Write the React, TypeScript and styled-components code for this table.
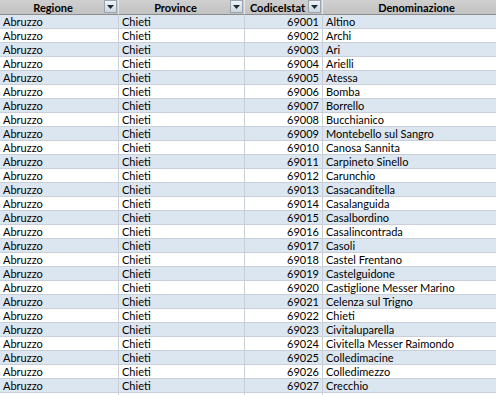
import React from "react";
import styled, { createGlobalStyle } from "styled-components";

const GlobalStyle = createGlobalStyle`
  html, body {
    margin: 0;
    padding: 0;
    background: #ffffff;
    overflow: hidden;
  }
`;

const Sheet = styled.div`
  display: grid;
  grid-template-columns: 119px 126px 78px 188px;
  width: 511px;
  font-family: "Lato", "Liberation Sans", sans-serif;
  font-size: 11px;
  color: #000000;
`;

const HeadCell = styled.div<{ $filter?: boolean }>`
  box-sizing: border-box;
  height: 15px;
  background: linear-gradient(#cfcfcf, #c3c3c3);
  border-right: 1px solid #e6e6e6;
  border-bottom: 1px solid #8c8c8c;
  display: flex;
  align-items: center;
  justify-content: center;
  position: relative;
  font-weight: 700;
  padding-right: ${(p) => (p.$filter ? "12px" : "0")};
`;

const Filter = styled.span`
  position: absolute;
  right: 1px;
  top: 0;
  width: 13px;
  height: 13px;
  box-sizing: border-box;
  border: 1px solid #9aa4ae;
  background: linear-gradient(#eef2f6, #cdd6df);
  display: flex;
  align-items: center;
  justify-content: center;
`;

const Cell = styled.div<{ $odd: boolean; $align?: string }>`
  box-sizing: border-box;
  height: 14px;
  line-height: 13px;
  background: ${(p) => (p.$odd ? "#dce6f1" : "#ffffff")};
  border-right: 1px solid #c9cfd8;
  border-bottom: 1px solid #c9cfd8;
  padding: 0 3px;
  text-align: ${(p) => p.$align || "left"};
  white-space: nowrap;
  overflow: hidden;
`;

const comuni = [
  "Altino",
  "Archi",
  "Ari",
  "Arielli",
  "Atessa",
  "Bomba",
  "Borrello",
  "Bucchianico",
  "Montebello sul Sangro",
  "Canosa Sannita",
  "Carpineto Sinello",
  "Carunchio",
  "Casacanditella",
  "Casalanguida",
  "Casalbordino",
  "Casalincontrada",
  "Casoli",
  "Castel Frentano",
  "Castelguidone",
  "Castiglione Messer Marino",
  "Celenza sul Trigno",
  "Chieti",
  "Civitaluparella",
  "Civitella Messer Raimondo",
  "Colledimacine",
  "Colledimezzo",
  "Crecchio",
];

const Arrow = () => (
  <svg width="7" height="4" viewBox="0 0 7 4">
    <path d="M0 0 H7 L3.5 4 Z" fill="#1e2a36" />
  </svg>
);

const App = () => (
  <>
    <GlobalStyle />
    <Sheet>
      <HeadCell $filter>
        Regione
        <Filter>
          <Arrow />
        </Filter>
      </HeadCell>
      <HeadCell $filter>
        Province
        <Filter>
          <Arrow />
        </Filter>
      </HeadCell>
      <HeadCell $filter>
        CodiceIstat
        <Filter>
          <Arrow />
        </Filter>
      </HeadCell>
      <HeadCell>Denominazione</HeadCell>
      {comuni.map((name, i) => {
        const odd = i % 2 === 0;
        return (
          <React.Fragment key={name}>
            <Cell $odd={odd}>Abruzzo</Cell>
            <Cell $odd={odd}>Chieti</Cell>
            <Cell $odd={odd} $align="right">
              {69001 + i}
            </Cell>
            <Cell $odd={odd}>{name}</Cell>
          </React.Fragment>
        );
      })}
      {/* next row only peeks in at the bottom edge */}
      <Cell $odd={false} />
      <Cell $odd={false} />
      <Cell $odd={false} />
      <Cell $odd={false} />
    </Sheet>
  </>
);

export default App;
